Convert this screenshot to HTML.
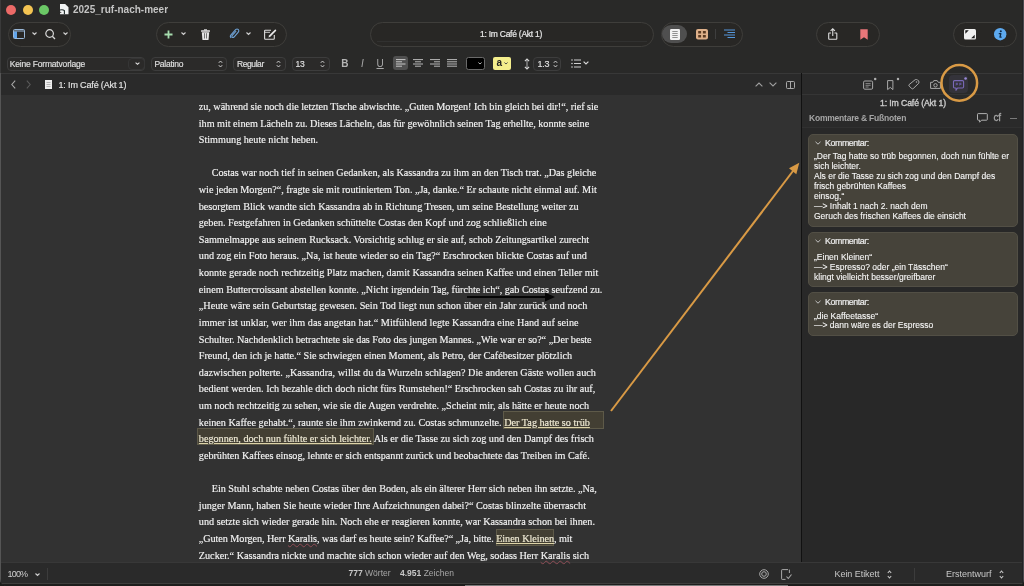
<!DOCTYPE html>
<html><head><meta charset="utf-8">
<style>
*{margin:0;padding:0;box-sizing:border-box}
html,body{width:1024px;height:586px;overflow:hidden;background:#1b1d1a}
body{font-family:"Liberation Sans",sans-serif;position:relative;color:#ddd}
#all{position:absolute;left:0;top:0;width:1024px;height:586px;will-change:transform}
.a{position:absolute}
svg{position:absolute;overflow:visible}
#win{position:absolute;left:0;top:0;width:1024px;height:586px;background:#323232;border-radius:0 0 7px 7px;overflow:hidden}
#titlebar{position:absolute;left:0;top:0;width:100%;height:73px;background:#292928}
.pill{position:absolute;top:21.5px;height:25px;border-radius:12.5px;border:1px solid #3f3e3b;background:#282725}
.tl{position:absolute;top:5px;width:10px;height:10px;border-radius:50%}
.pop{position:absolute;top:57px;height:13.5px;border:1px solid #3d3d3d;border-radius:4px;background:#2b2a29;font-size:8.5px;color:#e0e0e0;-webkit-text-stroke:0.15px #e0e0e0;line-height:13px;padding-left:3px}
#nav{position:absolute;left:0;top:73px;width:802px;height:21.5px;border-top:1px solid #383838;background:#2a2a2a}
#insp{position:absolute;left:802px;top:73px;width:222px;height:489px;background:#2a2a2a}
#inspTool{position:absolute;left:802px;top:73px;width:222px;height:21.5px;border-top:1px solid #383838;border-bottom:1px solid #353535;background:#2a2a2a}
#inspList{position:absolute;left:802px;top:127px;width:222px;height:435px;background:#282828;border-top:1px solid #303030}
#divider{position:absolute;left:801px;top:73px;width:1px;height:511px;background:#111}
#footer{position:absolute;left:0;top:562px;width:1024px;height:24px;background:#2a2a2a;border-top:1px solid #383838}
#lb{position:absolute;left:0;top:0;width:1px;height:586px;background:linear-gradient(#3a3a3a 0,#3a3a3a 73px,#555 73px)}
#rb{position:absolute;left:1022px;top:0;width:2px;height:586px;background:linear-gradient(90deg,#232326 50%,#4a4a4e 50%)}
#bb{position:absolute;left:0;top:583px;width:1024px;height:1px;background:#3e3e3c}
#bb2{position:absolute;left:0;top:584px;width:1024px;height:2px;background:#1d1d1c}
#bb3{position:absolute;left:465px;top:585px;width:323px;height:1px;background:#7a7a7a}
.dl{position:absolute;font-family:"Liberation Serif",serif;font-size:10.2px;line-height:16.62px;height:16.62px;color:#f4f4f4;-webkit-text-stroke:0.15px #f4f4f4;white-space:pre}
.hl{color:#f0e8c6;text-decoration:underline;text-decoration-color:#dcd3a8;text-decoration-thickness:1px;text-underline-offset:1px}
.sp{text-decoration:underline wavy #8f4c55;text-decoration-thickness:1px;text-underline-offset:1.2px}
.hbox{position:absolute;background:#433f33;border:1px solid #5e5a49}
.card{position:absolute;left:808px;width:209.5px;background:#46433a;border-radius:5px;border:1px solid #524f45}
.card .h{position:absolute;left:16px;top:2.5px;font-size:8.8px;line-height:12px;letter-spacing:-0.4px;color:#ececec;-webkit-text-stroke:0.2px #ececec}
.card .b{position:absolute;left:5px;font-size:8.5px;line-height:9.95px;color:#f8f8f8;-webkit-text-stroke:0.1px #f8f8f8;white-space:pre}
.sm{font-size:9.5px;color:#cfcfcf}
</style></head><body><div id="all">
<div id="win">
  <div id="titlebar"></div>
  <div id="nav"></div>
  <div id="insp"></div>
  <div id="inspTool"></div>
  <div id="inspList"></div>
  <div id="divider"></div>
  <div id="footer"></div>
  <div id="lb"></div>
  <div id="rb"></div>
  <div id="bb"></div>
  <div id="bb2"></div>
  <div id="bb3"></div>
</div>

<!-- traffic lights -->
<div class="tl" style="left:6.2px;background:#ec6a67"></div>
<div class="tl" style="left:22.8px;background:#f4c452"></div>
<div class="tl" style="left:38.9px;background:#6bc866"></div>
<svg style="left:59.8px;top:4px" width="8.5" height="10.2" viewBox="0 0 8.5 10.2"><path d="M0 0H5.2L8.5 3.3V10.2H0Z" fill="#f2f4f4"/><path d="M0 6Q3 5.3 4.4 6.6V10.2" fill="none" stroke="#1e2a28" stroke-width="1.1"/><path d="M0.2 7.6L1.6 8.6L0.2 9.2Z" fill="#2a2927"/></svg>
<div class="a" style="left:73px;top:4px;font-size:10px;line-height:12px;font-weight:bold;color:#c4c4c4;letter-spacing:0px">2025_ruf-nach-meer</div>

<!-- toolbar pills -->
<div class="pill" style="left:8px;width:63px"></div>
<div class="pill" style="left:156px;width:131px"></div>
<div class="pill" style="left:370px;width:284px"></div>
<div class="pill" style="left:660.5px;width:82.5px"></div>
<div class="pill" style="left:816px;width:64px"></div>
<div class="pill" style="left:953px;width:64px"></div>

<!-- group 1 icons -->
<svg style="left:13px;top:29px" width="12" height="10" viewBox="0 0 12 10"><rect x="0.5" y="0.5" width="11" height="9" rx="1" fill="none" stroke="#9ab8d8" stroke-width="1"/><rect x="1" y="2.5" width="3" height="6.5" fill="#62a6ec"/><line x1="0.5" y1="2" x2="11.5" y2="2" stroke="#9ab8d8"/></svg>
<svg style="left:31.5px;top:31.5px" width="5" height="3" viewBox="0 0 5 3"><path d="M0.5 0.5L2.5 2.5L4.5 0.5" fill="none" stroke="#d0d0d0" stroke-width="1.1"/></svg>
<svg style="left:45px;top:28.5px" width="11" height="11" viewBox="0 0 11 11"><circle cx="4.6" cy="4.5" r="3.8" fill="none" stroke="#d8d8d8" stroke-width="1.2"/><line x1="7.3" y1="7.3" x2="10" y2="10" stroke="#d8d8d8" stroke-width="1.3"/></svg>
<svg style="left:63px;top:31.5px" width="5" height="3" viewBox="0 0 5 3"><path d="M0.5 0.5L2.5 2.5L4.5 0.5" fill="none" stroke="#d0d0d0" stroke-width="1.1"/></svg>

<!-- group 2 icons -->
<svg style="left:163.5px;top:29.5px" width="9" height="9" viewBox="0 0 9 9"><path d="M4.5 0.5V8.5M0.5 4.5H8.5" stroke="#a6dcae" stroke-width="1.8"/></svg>
<svg style="left:180.5px;top:32px" width="5" height="3" viewBox="0 0 5 3"><path d="M0.5 0.5L2.5 2.5L4.5 0.5" fill="none" stroke="#d0d0d0" stroke-width="1.1"/></svg>
<svg style="left:200.5px;top:28.5px" width="9" height="11" viewBox="0 0 9 11"><path d="M3 0.3H6V1.5H3Z" fill="#e6e6e6"/><rect x="0" y="1.3" width="9" height="1.5" rx="0.5" fill="#e6e6e6"/><path d="M0.8 3.2H8.2L7.6 10.5Q7.5 11 7 11H2Q1.5 11 1.4 10.5Z" fill="#e6e6e6"/><rect x="3" y="4.2" width="0.9" height="5.3" fill="#666"/><rect x="5.1" y="4.2" width="0.9" height="5.3" fill="#666"/></svg>
<svg style="left:228.5px;top:28px" width="11" height="11" viewBox="0 0 11 11"><path d="M2.2 9.8Q0.6 8.4 2 6.8L6.6 1.6Q8 0.4 9.3 1.5Q10.5 2.8 9.3 4.2L5 9Q4 10 3.2 9.2Q2.4 8.4 3.3 7.4L7.2 3" fill="none" stroke="#6ea2d6" stroke-width="1.1"/></svg>
<svg style="left:246px;top:32px" width="5" height="3" viewBox="0 0 5 3"><path d="M0.5 0.5L2.5 2.5L4.5 0.5" fill="none" stroke="#d0d0d0" stroke-width="1.1"/></svg>
<svg style="left:264px;top:28.5px" width="13" height="11" viewBox="0 0 13 11"><path d="M7 1.3H1.3Q0.6 1.3 0.6 2V9.6Q0.6 10.3 1.3 10.3H9.6Q10.3 10.3 10.3 9.6V6" fill="none" stroke="#dcdcdc" stroke-width="1.1"/><line x1="0.6" y1="3.3" x2="6" y2="3.3" stroke="#dcdcdc" stroke-width="0.9"/><path d="M4.5 8.5L5 6.5L10.8 0.7Q11.4 0.2 12 0.8Q12.5 1.4 12 2L6.3 7.8Z" fill="#e8e8e8"/></svg>

<div class="a" style="left:377px;top:41px;width:270px;height:1px;background:#313130"></div>
<!-- title pill text -->
<div class="a" style="left:480px;top:28px;font-size:8.5px;line-height:12px;letter-spacing:-0.25px;color:#e8e8e8;-webkit-text-stroke:0.2px #e8e8e8">1: Im Café (Akt 1)</div>

<!-- view segmented -->
<div class="a" style="left:662px;top:25px;width:25px;height:18px;border-radius:9px;background:#4f4f4f"></div>
<svg style="left:670px;top:28.5px" width="10" height="11" viewBox="0 0 10 11"><rect x="0" y="0" width="10" height="11" rx="1.2" fill="#f2f2f2"/><path d="M2.3 2.5H7.7M2.3 4.5H7.7M2.3 6.5H7.7M2.3 8.5H7.7" stroke="#777" stroke-width="0.8"/></svg>
<svg style="left:696px;top:28.8px" width="12" height="10.5" viewBox="0 0 12 10.5"><rect x="0" y="0" width="12" height="10.5" rx="2" fill="#deb08a"/><rect x="2.2" y="2" width="2.9" height="2.5" fill="#5a3a22"/><rect x="6.9" y="2" width="2.9" height="2.5" fill="#5a3a22"/><rect x="2.2" y="6" width="2.9" height="2.5" fill="#5a3a22"/><rect x="6.9" y="6" width="2.9" height="2.5" fill="#5a3a22"/></svg>
<div class="a" style="left:715px;top:29px;width:1px;height:10px;background:#3e3e3e"></div>
<svg style="left:724px;top:28.5px" width="11" height="10" viewBox="0 0 11 10"><path d="M0 1H11M3.5 3.5H11M0 6H11M3.5 8.5H11" stroke="#5597dc" stroke-width="1"/></svg>

<!-- share / bookmark -->
<svg style="left:827.5px;top:27.5px" width="10" height="12" viewBox="0 0 10 12"><path d="M3 5H1.2Q0.7 5 0.7 5.5V10.8Q0.7 11.3 1.2 11.3H8.3Q8.8 11.3 8.8 10.8V5.5Q8.8 5 8.3 5H6.5" fill="none" stroke="#dcdcdc" stroke-width="1.1"/><path d="M4.75 0.8V8M2.6 2.9L4.75 0.8L6.9 2.9" fill="none" stroke="#dcdcdc" stroke-width="1.1"/></svg>
<svg style="left:860px;top:28.8px" width="8" height="11" viewBox="0 0 8 11"><path d="M0.3 0.3H7.7V10.8L4 8.2L0.3 10.8Z" fill="#e97679"/></svg>

<!-- fullscreen / info -->
<svg style="left:963.5px;top:29px" width="12" height="10.5" viewBox="0 0 12 10.5"><rect x="0" y="0" width="12" height="10.5" rx="1.5" fill="#f0f0f0"/><path d="M1.3 1.3H4.8L1.3 4.8Z" fill="#1a1a1a"/><path d="M10.7 9.2H7.2L10.7 5.7Z" fill="#1a1a1a"/></svg>
<svg style="left:994px;top:28px" width="12.4" height="12.4" viewBox="0 0 12 12"><circle cx="6" cy="6" r="6" fill="#5daaf0"/><circle cx="6.6" cy="3.2" r="1" fill="#0d2a4a"/><path d="M4.6 5.4H6.6L5.8 8.9H7.4" fill="none" stroke="#0d2a4a" stroke-width="1.3" stroke-linejoin="round"/></svg>

<!-- format bar -->
<div class="pop" style="left:7px;width:138px;letter-spacing:-0.19px;padding-left:1.8px">Keine Formatvorlage</div>
<div class="a" style="left:128px;top:57.5px;width:16.5px;height:12.5px;border:1px solid #353535;border-radius:4px"></div>
<svg style="left:134.5px;top:62px" width="5" height="3" viewBox="0 0 5 3"><path d="M0.6 0.6L2.5 2.3L4.4 0.6" fill="none" stroke="#e0e0e0" stroke-width="1.1"/></svg>
<div class="pop" style="left:151px;width:76px;letter-spacing:-0.24px;padding-left:2.4px">Palatino</div>
<div class="pop" style="left:233px;width:53px;letter-spacing:-0.42px">Regular</div>
<div class="pop" style="left:291.5px;width:38px;letter-spacing:-0.3px">13</div>
<svg style="left:218px;top:59.5px" width="5" height="8" viewBox="0 0 5 8"><path d="M0.8 2.8L2.5 1L4.2 2.8M0.8 5.2L2.5 7L4.2 5.2" fill="none" stroke="#cfcfcf" stroke-width="1"/></svg>
<svg style="left:276px;top:59.5px" width="5" height="8" viewBox="0 0 5 8"><path d="M0.8 2.8L2.5 1L4.2 2.8M0.8 5.2L2.5 7L4.2 5.2" fill="none" stroke="#cfcfcf" stroke-width="1"/></svg>
<svg style="left:320px;top:59.5px" width="5" height="8" viewBox="0 0 5 8"><path d="M0.8 2.8L2.5 1L4.2 2.8M0.8 5.2L2.5 7L4.2 5.2" fill="none" stroke="#cfcfcf" stroke-width="1"/></svg>
<div class="a" style="left:341.3px;top:57.5px;font-size:10px;line-height:12px;font-weight:bold;color:#b4b4b4">B</div>
<div class="a" style="left:361px;top:57.5px;font-size:10px;line-height:12px;font-style:italic;color:#a8a8a8">I</div>
<div class="a" style="left:376.5px;top:57.5px;font-size:10px;line-height:12px;color:#a8a8a8;text-decoration:underline">U</div>
<div class="a" style="left:393px;top:56px;width:14.5px;height:14px;border-radius:3px;background:#505050"></div>
<svg style="left:395.5px;top:59px" width="10" height="8" viewBox="0 0 10 8"><path d="M0 0.6H9.5M0 2.8H6M0 5H9.5M0 7.2H6" stroke="#d6d6d6" stroke-width="0.9"/></svg>
<svg style="left:412.5px;top:59px" width="10" height="8" viewBox="0 0 10 8"><path d="M0 0.6H10M2 2.8H8M0 5H10M2 7.2H8" stroke="#c8c8c8" stroke-width="0.9"/></svg>
<svg style="left:429.5px;top:59px" width="10" height="8" viewBox="0 0 10 8"><path d="M0 0.6H10M4 2.8H10M0 5H10M4 7.2H10" stroke="#c8c8c8" stroke-width="0.9"/></svg>
<svg style="left:446.5px;top:59px" width="10" height="8" viewBox="0 0 10 8"><path d="M0 0.6H10M0 2.8H10M0 5H10M0 7.2H10" stroke="#c8c8c8" stroke-width="0.9"/></svg>
<div class="a" style="left:466px;top:57px;width:19px;height:12.5px;border-radius:2.5px;background:#000;border:1.2px solid #6a6a6a"></div>
<svg style="left:478px;top:62px" width="4" height="3" viewBox="0 0 4 3"><path d="M0.4 0.5L2 2L3.6 0.5" fill="none" stroke="#ccc" stroke-width="0.9"/></svg>
<div class="a" style="left:492.5px;top:57px;width:18px;height:12.5px;border-radius:2px;background:#f4ee8c"></div>
<div class="a" style="left:496.5px;top:56.5px;font-size:10px;font-weight:bold;color:#222">a</div>
<svg style="left:503.5px;top:62px" width="4" height="3" viewBox="0 0 4 3"><path d="M0.4 0.5L2 2L3.6 0.5" fill="none" stroke="#444" stroke-width="0.9"/></svg>
<svg style="left:523.5px;top:57.5px" width="6" height="12" viewBox="0 0 6 12"><path d="M3 1.2V10.8" stroke="#bdbdbd" stroke-width="0.9"/><path d="M0.9 3.2L3 1L5.1 3.2M0.9 8.8L3 11L5.1 8.8" fill="none" stroke="#d8d8d8" stroke-width="1.1"/></svg>
<div class="pop" style="left:533px;width:28px;background:#2a2a2a;font-size:9px;padding-left:3.5px;letter-spacing:-0.2px">1.3</div>
<svg style="left:552.5px;top:59.5px" width="5" height="8" viewBox="0 0 5 8"><path d="M0.8 2.8L2.5 1L4.2 2.8M0.8 5.2L2.5 7L4.2 5.2" fill="none" stroke="#cfcfcf" stroke-width="1"/></svg>
<svg style="left:570.5px;top:58.5px" width="10" height="9" viewBox="0 0 10 9"><circle cx="1" cy="1" r="0.8" fill="#d0d0d0"/><circle cx="1" cy="4.5" r="0.8" fill="#d0d0d0"/><circle cx="1" cy="8" r="0.8" fill="#d0d0d0"/><path d="M3 1H10M3 4.5H10M3 8H10" stroke="#d0d0d0" stroke-width="1"/></svg>
<svg style="left:582.5px;top:61px" width="6" height="4" viewBox="0 0 6 4"><path d="M0.6 0.6L3 3L5.4 0.6" fill="none" stroke="#d6d6d6" stroke-width="1.2"/></svg>

<!-- nav bar -->
<svg style="left:11px;top:80px" width="5" height="9" viewBox="0 0 5 9"><path d="M4.2 0.6L0.8 4.5L4.2 8.4" fill="none" stroke="#a8a8a8" stroke-width="1.1"/></svg>
<svg style="left:26px;top:80px" width="5" height="9" viewBox="0 0 5 9"><path d="M0.8 0.6L4.2 4.5L0.8 8.4" fill="none" stroke="#5a5a5a" stroke-width="1.1"/></svg>
<svg style="left:45px;top:79.5px" width="7" height="9" viewBox="0 0 7 9"><rect x="0" y="0" width="7" height="9" fill="#eeeeee"/><path d="M1.5 2.5H5.5M1.5 4.5H5.5M1.5 6.5H5.5" stroke="#999" stroke-width="0.7"/></svg>
<div class="a" style="left:58.5px;top:78.5px;font-size:9px;line-height:12px;letter-spacing:-0.15px;color:#e4e4e4;-webkit-text-stroke:0.15px #e4e4e4">1: Im Café (Akt 1)</div>
<svg style="left:755px;top:82px" width="8" height="5" viewBox="0 0 8 5"><path d="M0.6 4.4L4 1L7.4 4.4" fill="none" stroke="#a0a0a0" stroke-width="1.1"/></svg>
<svg style="left:769px;top:82px" width="8" height="5" viewBox="0 0 8 5"><path d="M0.6 0.6L4 4L7.4 0.6" fill="none" stroke="#a0a0a0" stroke-width="1.1"/></svg>
<svg style="left:786px;top:80.5px" width="9" height="8" viewBox="0 0 9 8"><rect x="0.5" y="0.5" width="8" height="7" rx="1" fill="none" stroke="#a8a8a8" stroke-width="1"/><line x1="4.5" y1="0.5" x2="4.5" y2="7.5" stroke="#a8a8a8"/></svg>

<!-- inspector toolbar icons -->
<svg style="left:862.5px;top:79.5px" width="14" height="10" viewBox="0 0 14 10"><rect x="0.6" y="1" width="9" height="8.2" rx="1.2" fill="none" stroke="#a9a9a9" stroke-width="1"/><path d="M2.5 3.6H7.6M2.5 5.3H7.6M2.5 7H5.6" stroke="#a0a0a0" stroke-width="0.8"/><circle cx="12.2" cy="-1" r="1.25" fill="#b0b0b0"/></svg>
<svg style="left:886.5px;top:79.5px" width="13" height="11" viewBox="0 0 13 11"><path d="M0.6 0.6H5.9V9.6L3.25 7.4L0.6 9.6Z" fill="none" stroke="#a9a9a9" stroke-width="1" stroke-linejoin="round"/><circle cx="11" cy="-1" r="1.25" fill="#b0b0b0"/></svg>
<svg style="left:907.5px;top:79px" width="11.5" height="10.5" viewBox="0 0 11.5 10.5"><path d="M7.2 0.7Q8.4 0.2 9.6 0.9L10.6 1.9Q11.3 3 10.8 4.2L5.2 9.6Q4.5 10.2 3.8 9.6L1.1 7Q0.5 6.3 1.1 5.6Z" fill="none" stroke="#a9a9a9" stroke-width="1" stroke-linejoin="round"/><circle cx="8.5" cy="2.9" r="0.75" fill="#a9a9a9"/></svg>
<svg style="left:929.5px;top:80px" width="11" height="9" viewBox="0 0 11 9"><path d="M0.6 2.3H2.8L3.8 0.6H7.2L8.2 2.3H10.4V8.4H0.6Z" fill="none" stroke="#a9a9a9" stroke-width="1" stroke-linejoin="round"/><circle cx="5.5" cy="5.3" r="1.7" fill="none" stroke="#a9a9a9" stroke-width="1"/></svg>
<div class="a" style="left:948.5px;top:74.5px;width:19.5px;height:18px;border-radius:4px;background:#34333a"></div>
<svg style="left:953px;top:80px" width="14" height="11" viewBox="0 0 14 11"><path d="M1.6 0.6H9.4Q10.6 0.6 10.6 1.8V6.8Q10.6 8 9.4 8H4.6L3 10.3V8H1.6Q0.5 8 0.5 6.8V1.8Q0.5 0.6 1.6 0.6Z" fill="none" stroke="#7a69b8" stroke-width="1.1" stroke-linejoin="round"/><path d="M2.7 2.8H4.9V5H3.6L2.7 6ZM6.2 2.8H8.4V5H7.1L6.2 6Z" fill="#5f5294"/><circle cx="12.6" cy="-1.5" r="1.3" fill="#9a8ad8"/></svg>
<!-- inspector header text -->
<div class="a" style="left:880px;top:97px;font-size:8.7px;line-height:12px;letter-spacing:-0.12px;color:#cccccc;-webkit-text-stroke:0.35px #cccccc">1: Im Café (Akt 1)</div>
<div class="a" style="left:809px;top:112px;font-size:8.5px;line-height:12px;letter-spacing:-0.21px;font-weight:bold;color:#a6a6a6">Kommentare &amp; Fußnoten</div>
<svg style="left:977px;top:113px" width="11" height="10" viewBox="0 0 11 10"><path d="M1.2 0.6H9.6Q10.3 0.6 10.3 1.3V6.5Q10.3 7.2 9.6 7.2H4.5L2.6 9.2V7.2H1.2Q0.5 7.2 0.5 6.5V1.3Q0.5 0.6 1.2 0.6Z" fill="none" stroke="#b0b0b0" stroke-width="1"/></svg>
<div class="a" style="left:993.5px;top:111.5px;font-size:10px;line-height:12px;letter-spacing:-0.2px;color:#a4a4a4;-webkit-text-stroke:0.3px #a4a4a4">cf</div>
<div class="a" style="left:1010px;top:118px;width:7px;height:1px;background:#7a7a7a"></div>

<!-- cards -->
<div class="card" style="top:133.5px;height:93px"><svg style="left:6px;top:6.5px" width="6" height="4" viewBox="0 0 6 4"><path d="M0.5 0.8L3 3.2L5.5 0.8" fill="none" stroke="#cfcfcf" stroke-width="0.9"/></svg><div class="h">Kommentar:</div><div class="b" style="top:17.5px">„Der Tag hatte so trüb begonnen, doch nun fühlte er
sich leichter.
Als er die Tasse zu sich zog und den Dampf des
frisch gebrühten Kaffees
einsog,“
—&gt; Inhalt 1 nach 2. nach dem
Geruch des frischen Kaffees die einsicht</div></div>
<div class="card" style="top:231.5px;height:55px"><svg style="left:6px;top:6.5px" width="6" height="4" viewBox="0 0 6 4"><path d="M0.5 0.8L3 3.2L5.5 0.8" fill="none" stroke="#cfcfcf" stroke-width="0.9"/></svg><div class="h">Kommentar:</div><div class="b" style="top:19px;line-height:10.2px">„Einen Kleinen“
—&gt; Espresso? oder „ein Tässchen“
klingt vielleicht besser/greifbarer</div></div>
<div class="card" style="top:292px;height:43.5px"><svg style="left:6px;top:6.5px" width="6" height="4" viewBox="0 0 6 4"><path d="M0.5 0.8L3 3.2L5.5 0.8" fill="none" stroke="#cfcfcf" stroke-width="0.9"/></svg><div class="h">Kommentar:</div><div class="b" style="top:18.5px">„die Kaffeetasse“
—&gt; dann wäre es der Espresso</div></div>

<!-- highlight boxes -->
<div class="hbox" style="left:503px;top:411px;width:101px;height:17.5px"></div>
<div class="hbox" style="left:197px;top:428px;width:177px;height:16.5px"></div>
<div class="hbox" style="left:496px;top:528.5px;width:58px;height:17px"></div>

<div class="dl" style="top:98.90px;left:198.8px;letter-spacing:-0.046px">zu, während sie noch die letzten Tische abwischte. „Guten Morgen! Ich bin gleich bei dir!“, rief sie</div>
<div class="dl" style="top:115.52px;left:198.8px;letter-spacing:-0.030px">ihm mit einem Lächeln zu. Dieses Lächeln, das für gewöhnlich seinen Tag erhellte, konnte seine</div>
<div class="dl" style="top:132.14px;left:198.8px;letter-spacing:-0.004px">Stimmung heute nicht heben.</div>
<div class="dl" style="top:165.38px;left:211.7px;letter-spacing:-0.013px">Costas war noch tief in seinen Gedanken, als Kassandra zu ihm an den Tisch trat. „Das gleiche</div>
<div class="dl" style="top:182.00px;left:198.8px;letter-spacing:-0.033px">wie jeden Morgen?“, fragte sie mit routiniertem Ton. „Ja, danke.“ Er schaute nicht einmal auf. Mit</div>
<div class="dl" style="top:198.62px;left:198.8px;letter-spacing:-0.036px">besorgtem Blick wandte sich Kassandra ab in Richtung Tresen, um seine Bestellung weiter zu</div>
<div class="dl" style="top:215.24px;left:198.8px;letter-spacing:-0.022px">geben. Festgefahren in Gedanken schüttelte Costas den Kopf und zog schließlich eine</div>
<div class="dl" style="top:231.86px;left:198.8px;letter-spacing:-0.012px">Sammelmappe aus seinem Rucksack. Vorsichtig schlug er sie auf, schob Zeitungsartikel zurecht</div>
<div class="dl" style="top:248.48px;left:198.8px;letter-spacing:-0.010px">und zog ein Foto heraus. „Na, ist heute wieder so ein Tag?“ Erschrocken blickte Costas auf und</div>
<div class="dl" style="top:265.10px;left:198.8px;letter-spacing:0.006px">konnte gerade noch rechtzeitig Platz machen, damit Kassandra seinen Kaffee und einen Teller mit</div>
<div class="dl" style="top:281.72px;left:198.8px;letter-spacing:-0.017px">einem Buttercroissant abstellen konnte. „Nicht irgendein Tag, fürchte ich“, gab Costas seufzend zu.</div>
<div class="dl" style="top:298.34px;left:198.8px;letter-spacing:0.020px">„Heute wäre sein Geburtstag gewesen. Sein Tod liegt nun schon über ein Jahr zurück und noch</div>
<div class="dl" style="top:314.96px;left:198.8px;letter-spacing:0.031px">immer ist unklar, wer ihm das angetan hat.“ Mitfühlend legte Kassandra eine Hand auf seine</div>
<div class="dl" style="top:331.58px;left:198.8px;letter-spacing:-0.030px">Schulter. Nachdenklich betrachtete sie das Foto des jungen Mannes. „Wie war er so?“ „Der beste</div>
<div class="dl" style="top:348.20px;left:198.8px;letter-spacing:-0.030px">Freund, den ich je hatte.“ Sie schwiegen einen Moment, als Petro, der Cafébesitzer plötzlich</div>
<div class="dl" style="top:364.82px;left:198.8px;letter-spacing:0.018px">dazwischen polterte. „Kassandra, willst du da Wurzeln schlagen? Die anderen Gäste wollen auch</div>
<div class="dl" style="top:381.44px;left:198.8px;letter-spacing:-0.014px">bedient werden. Ich bezahle dich doch nicht fürs Rumstehen!“ Erschrocken sah Costas zu ihr auf,</div>
<div class="dl" style="top:398.06px;left:198.8px;letter-spacing:0.001px">um noch rechtzeitig zu sehen, wie sie die Augen verdrehte. „Scheint mir, als hätte er heute noch</div>
<div class="dl" style="top:414.68px;left:198.8px;letter-spacing:0.001px">keinen Kaffee gehabt.“, raunte sie ihm zwinkernd zu. Costas schmunzelte. <span class="hl">Der Tag hatte so trüb</span></div>
<div class="dl" style="top:431.30px;left:198.8px;letter-spacing:-0.006px"><span class="hl">begonnen, doch nun fühlte er sich leichter.</span> Als er die Tasse zu sich zog und den Dampf des frisch</div>
<div class="dl" style="top:447.92px;left:198.8px;letter-spacing:-0.008px">gebrühten Kaffees einsog, lehnte er sich entspannt zurück und beobachtete das Treiben im Café.</div>
<div class="dl" style="top:481.16px;left:211.7px;letter-spacing:-0.022px">Ein Stuhl schabte neben Costas über den Boden, als ein älterer Herr sich neben ihn setzte. „Na,</div>
<div class="dl" style="top:497.78px;left:198.8px;letter-spacing:0.009px">junger Mann, haben Sie heute wieder Ihre Aufzeichnungen dabei?“ Costas blinzelte überrascht</div>
<div class="dl" style="top:514.40px;left:198.8px;letter-spacing:0.014px">und setzte sich wieder gerade hin. Noch ehe er reagieren konnte, war Kassandra schon bei ihnen.</div>
<div class="dl" style="top:531.02px;left:198.8px;letter-spacing:-0.059px">„Guten Morgen, Herr <span class="sp">Karalis</span>, was darf es heute sein? Kaffee?“ „Ja, bitte. <span class="hl">Einen Kleinen</span>, mit</div>
<div class="dl" style="top:547.64px;left:198.8px;letter-spacing:-0.003px">Zucker.“ Kassandra nickte und machte sich schon wieder auf den Weg, sodass Herr <span class="sp">Karalis</span> sich</div>

<!-- footer -->
<div class="a" style="left:7.5px;top:567.5px;font-size:9px;line-height:12px;letter-spacing:-0.8px;color:#cfcfcf">100%</div>
<svg style="left:35px;top:572.5px" width="5" height="3" viewBox="0 0 5 3"><path d="M0.5 0.5L2.5 2.5L4.5 0.5" fill="none" stroke="#cfcfcf" stroke-width="1.1"/></svg>
<div class="a" style="left:47px;top:568px;width:1px;height:12px;background:#3c3c3c"></div>
<div class="a" style="left:348.5px;top:567px;font-size:8.5px;line-height:12px;color:#a8a8a8"><b style="color:#c8c8c8">777</b> Wörter</div><div class="a" style="left:400px;top:567px;font-size:8.5px;line-height:12px;color:#a8a8a8"><b style="color:#c8c8c8">4.951</b> Zeichen</div>
<svg style="left:759px;top:569px" width="10" height="10" viewBox="0 0 10 10"><circle cx="5" cy="5" r="4.3" fill="none" stroke="#a8a8a8" stroke-width="1"/><circle cx="5" cy="5" r="2.3" fill="none" stroke="#a8a8a8" stroke-width="1"/></svg>
<svg style="left:781px;top:568.5px" width="11" height="11" viewBox="0 0 11 11"><path d="M7 0.6H1.2Q0.6 0.6 0.6 1.2V9.8Q0.6 10.4 1.2 10.4H4.5M8.4 0.6V4" fill="none" stroke="#a8a8a8" stroke-width="1"/><path d="M5.5 7.5L7.3 9.5L10.5 5.5" fill="none" stroke="#a8a8a8" stroke-width="1.1"/></svg>
<div class="a" style="left:834.5px;top:567.5px;font-size:9px;line-height:12px;letter-spacing:-0.05px;color:#c8c8c8">Kein Etikett</div>
<svg style="left:886.5px;top:569.5px" width="5" height="9" viewBox="0 0 5 9"><path d="M0.8 3L2.5 1L4.2 3M0.8 6L2.5 8L4.2 6" fill="none" stroke="#c8c8c8" stroke-width="1.1"/></svg>
<div class="a" style="left:913.5px;top:568px;width:1px;height:13px;background:#3c3c3c"></div>
<div class="a" style="left:946px;top:567.5px;font-size:9px;line-height:12px;letter-spacing:-0.0px;color:#c8c8c8">Erstentwurf</div>
<svg style="left:999px;top:569.5px" width="5" height="9" viewBox="0 0 5 9"><path d="M0.8 3L2.5 1L4.2 3M0.8 6L2.5 8L4.2 6" fill="none" stroke="#c8c8c8" stroke-width="1.1"/></svg>

<!-- annotations -->
<svg style="left:0;top:0" width="1024" height="586">
  <line x1="467" y1="297" x2="548" y2="297" stroke="#050505" stroke-width="2.2"/>
  <polygon points="555,297 545,292.5 545,301.5" fill="#050505"/>
  <line x1="611" y1="411" x2="794.5" y2="169" stroke="#d99a45" stroke-width="2"/>
  <polygon points="799.3,162.8 789,168.3 796.3,174.3" fill="#d99a45"/>
  <circle cx="959.3" cy="82.9" r="17.8" fill="none" stroke="#d99a45" stroke-width="2.5"/>
</svg>
</div></body></html>
